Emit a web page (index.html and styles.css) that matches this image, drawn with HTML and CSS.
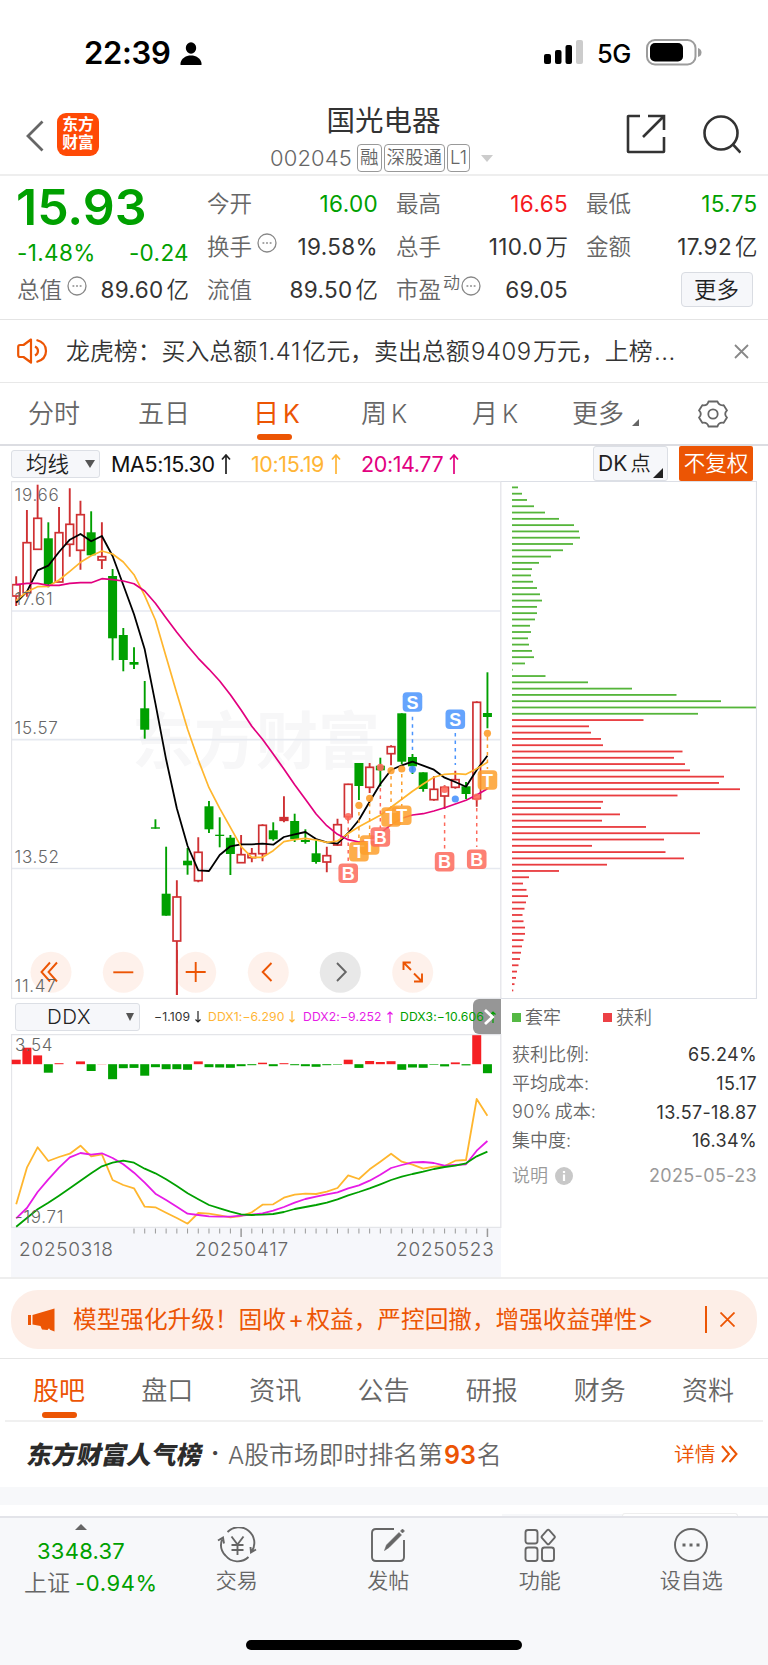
FILE: index.html
```html
<!DOCTYPE html>
<html lang="zh-CN">
<head>
<meta charset="utf-8">
<title>国光电器 002045</title>
<link rel="stylesheet" href="styles.css">
</head>
<body>
<div class="phone">
  <div class="status">
    <span class="time">22:39</span>
    <svg class="person" width="22" height="24" viewBox="0 0 22 24"><ellipse cx="11" cy="6" rx="5.2" ry="5.8"/><path d="M.5 23v-2C1.500 16 6 13.500 11 13.500S20.500 16 21.500 21v2z"/></svg>
    <svg class="signal" width="40" height="26" viewBox="0 0 40 26"><rect x="0" y="15" width="7" height="10" rx="2"/><rect x="11" y="11" width="6.500" height="14" rx="2"/><rect x="21.500" y="6" width="6.500" height="19" rx="2"/><rect class="dim" x="32" y="1" width="7" height="24" rx="2"/></svg>
    <span class="net">5G</span>
    <svg class="battery" width="56" height="27" viewBox="0 0 56 27"><rect x="1" y="1" width="48.500" height="24.500" rx="8" fill="none" stroke="#9c9c9c" stroke-width="2"/><rect x="4" y="4" width="33" height="18.500" rx="5"/><path d="M52 9q3.500 1 3.500 4.500T52 18z" fill="#9c9c9c"/></svg>
  </div>

  <header class="header">
    <svg class="back" width="20" height="32" viewBox="0 0 20 32"><path d="M17.500 1.500 3 16l14.500 14.500"/></svg>
    <div class="logo"><span>东方</span><span>财富</span></div>
    <div class="title">
      <h1>国光电器</h1>
      <div class="sub"><span class="code">002045</span><i class="tag">融</i><i class="tag">深股通</i><i class="tag">L1</i><b class="caret"></b></div>
    </div>
    <svg class="share" width="40" height="40" viewBox="0 0 40 40"><path d="M14 2H2.500Q2 2 2 2.500v35q0 .5.500.5h35q.5 0 .5-.5V23M22 2h16v14M37.500 2.500 17 23"/></svg>
    <svg class="search" width="38" height="40" viewBox="0 0 38 40"><circle cx="18" cy="18" r="16.500"/><path d="m29.500 29 8 8.500"/></svg>
  </header>

  <section class="quote">
    <div class="price">15.93</div>
    <div class="cell"><span>今开</span><b class="g">16.00</b></div>
    <div class="cell"><span>最高</span><b class="r">16.65</b></div>
    <div class="cell"><span>最低</span><b class="g">15.75</b></div>
    <div class="cell change"><b class="g">-1.48%</b><b class="g">-0.24</b></div>
    <div class="cell"><span>换手<svg class="info" width="20" height="20" viewBox="0 0 20 20"><circle cx="10" cy="10" r="9"/><path d="M5.500 10h1.800M9.100 10h1.800M12.700 10h1.800"/></svg></span><b>19.58%</b></div>
    <div class="cell"><span>总手</span><b>110.0<em>万</em></b></div>
    <div class="cell"><span>金额</span><b>17.92<em>亿</em></b></div>
    <div class="cell"><span>总值<svg class="info" width="20" height="20" viewBox="0 0 20 20"><circle cx="10" cy="10" r="9"/><path d="M5.500 10h1.800M9.100 10h1.800M12.700 10h1.800"/></svg></span><b>89.60<em>亿</em></b></div>
    <div class="cell"><span>流值</span><b>89.50<em>亿</em></b></div>
    <div class="cell"><span>市盈<sup>动</sup><svg class="info tight" width="20" height="20" viewBox="0 0 20 20"><circle cx="10" cy="10" r="9"/><path d="M5.500 10h1.800M9.100 10h1.800M12.700 10h1.800"/></svg></span><b>69.05</b></div>
    <div class="cell end"><button class="more">更多</button></div>
  </section>

  <section class="news">
    <svg class="horn" width="31" height="26" viewBox="0 0 31 26"><path d="M14 1.500 6.500 7H3Q1.200 7 1.200 9v8q0 2 1.800 2h3.500l7.500 5.500zM18 8.500q3 1.500 3 4.500t-3 4.500M19.500 2Q29 4.500 29 13t-9.500 11"/></svg>
    <p>龙虎榜：买入总额<i>1.41</i>亿元，卖出总额<i>9409</i>万元，上榜<i>...</i></p>
    <svg class="x" width="15" height="15" viewBox="0 0 15 15"><path d="m1 1 13 13M14 1 1 14"/></svg>
  </section>

  <nav class="periods">
    <span class="p1">分时</span><span class="p2">五日</span><span class="p3 on">日<i>K</i></span><span class="p4">周<i>K</i></span><span class="p5">月<i>K</i></span><span class="p6">更多<b></b></span>
    <svg class="gear" width="30" height="28" viewBox="0 0 30 28"><path d="M10.500 1.500h9q1.200 3.700 5 3.800l1.200-.1 3.300 5.200q-3.600 3.600 0 7.200l-3.300 5.200q-5-.9-6.200 3.700h-9q-1.200-4.600-6.200-3.700L1 17.600q3.600-3.600 0-7.200l3.300-5.200q5 .9 6.200-3.700z" stroke-linejoin="round"/><circle cx="15" cy="14" r="4.700"/></svg>
  </nav>

  <div class="mabar">
    <div class="select"><span>均线</span><b></b></div>
    <span class="ma m5">MA5:15.30</span><svg class="arr k" viewBox="0 0 10 20"><path d="M5 20V1M1 5.500 5 1l4 4.500"/></svg>
    <span class="ma m10">10:15.19</span><svg class="arr o" viewBox="0 0 10 20"><path d="M5 20V1M1 5.500 5 1l4 4.500"/></svg>
    <span class="ma m20">20:14.77</span><svg class="arr p" viewBox="0 0 10 20"><path d="M5 20V1M1 5.500 5 1l4 4.500"/></svg>
    <div class="dk">DK<em>点</em><b></b></div>
    <div class="fq">不复权</div>
  </div>

  <div class="charts">
    <div class="left">
      <svg id="kline" width="491" height="518" viewBox="11 481 491 518"></svg>
      <div class="ddxbar">
        <div class="select"><span>DDX</span><b></b></div>
        <div class="ddxvals"><span class="d0">−1.109</span><svg class="sarr k" viewBox="0 0 6 12"><path d="M3 0v11M.500 8.500 3 11l2.500-2.500"/></svg><span class="d1">DDX1:−6.290</span><svg class="sarr o" viewBox="0 0 6 12"><path d="M3 0v11M.500 8.500 3 11l2.500-2.500"/></svg><span class="d2">DDX2:−9.252</span><svg class="sarr m" viewBox="0 0 6 12"><path d="M3 12V1M.500 3.500 3 1l2.500 2.500"/></svg><span class="d3">DDX3:−10.606</span><svg class="sarr gr" viewBox="0 0 6 12"><path d="M3 12V1M.500 3.500 3 1l2.500 2.500"/></svg></div>
        <div class="next"><svg width="12" height="18" viewBox="0 0 12 18"><path d="m2 2 7.500 7L2 16"/></svg></div>
      </div>
      <svg id="ddx" width="491" height="194" viewBox="11 1034 491 194"></svg>
      <div class="dates"><svg id="ticks" width="491" height="10" viewBox="11 1228 491 10"></svg><div class="daterow"><span>20250318</span><span>20250417</span><span>20250523</span></div></div>
    </div>
    <aside class="right">
      <svg id="profile" width="256" height="518" viewBox="501 481 256 518"></svg>
      <div class="legend"><b class="lg"></b><span>套牢</span><b class="lr"></b><span>获利</span></div>
      <dl>
        <div><dt>获利比例:</dt><dd>65.24%</dd></div>
        <div><dt>平均成本:</dt><dd>15.17</dd></div>
        <div><dt><i>90%</i>成本:</dt><dd>13.57-18.87</dd></div>
        <div><dt>集中度:</dt><dd>16.34%</dd></div>
        <div class="note"><dt>说明<svg width="18" height="18" viewBox="0 0 18 18"><circle cx="9" cy="9" r="9" fill="#c8c8c8"/><path d="M9 4v2M9 7.500V14" stroke="#fff" stroke-width="2.200"/></svg></dt><dd>2025-05-23</dd></div>
      </dl>
    </aside>
  </div>

  <div class="promo">
    <div class="pill">
      <svg class="mega" width="27" height="24" viewBox="0 0 27 24"><path d="M0 7h3v10H0zM4.500 7 26.500.500v23l-4.500-1.800-1-1.500-1.500 1.800-5.500-.5-1.500-3.500-8-1.500z"/></svg>
      <p>模型强化升级！固收<i>+</i>权益，严控回撤，增强收益弹性&gt;</p>
      <span class="bar"></span>
      <svg class="x" width="15" height="15" viewBox="0 0 15 15"><path d="m.5.500 14 14M14.500.500l-14 14"/></svg>
    </div>
  </div>

  <nav class="tabs"><span class="on">股吧</span><span>盘口</span><span>资讯</span><span>公告</span><span>研报</span><span>财务</span><span>资料</span></nav>

  <div class="rank">
    <strong>东方财富人气榜</strong><span class="dot">·</span><span class="rk"><i>A</i>股市场即时排名第<b>93</b>名</span>
    <span class="detail">详情</span><svg class="dbl" width="17" height="18" viewBox="0 0 17 18"><path d="m1 1 7 8-7 8M8.500 1l7 8-7 8"/></svg>
  </div>
  <div class="strip"></div>
  <div class="peek"><i></i><b></b></div>

  <footer class="footer">
    <div class="index"><b class="up"></b><span class="pts">3348.37</span><span class="idx"><em>上证</em>-0.94%</span></div>
    <div class="item"><svg width="40" height="36" viewBox="0 0 40 36"><path d="M8.500 28.500A15.500 15.500 0 0 1 5 12.500M10.500 5A15.600 15.600 0 0 1 34.700 24.500M31.500 30A15.600 15.600 0 0 1 8.500 28.500M1 13.500l5-3 1 6M39 22.500l-5 3-.500-5.500M14.500 9.500l6 8 6-8M20.500 17.500V28M14.500 18h12M14.500 23h12"/></svg><span>交易</span></div>
    <div class="item"><svg width="36" height="36" viewBox="0 0 36 36"><path d="M24 2H6Q2 2 2 6v24q0 4 4 4h24q4 0 4-4V13"/><path d="m14.500 23.500 2-5.500L29 5.500 31.500 8 19 20.500zM30.500 4l2-2 2 2-2 2z" fill="#666" stroke-width=".6"/></svg><span>发帖</span></div>
    <div class="item"><svg width="32" height="36" viewBox="0 0 32 36"><rect x="1.500" y="3" width="12" height="13.500" rx="2.500"/><rect x="1.500" y="20.500" width="12" height="13.500" rx="2.500"/><rect x="18" y="20.500" width="12" height="13.500" rx="2.500"/><path d="M23.200 3.200q1-1 2 0l5.300 6q.7.800 0 1.600l-5.300 6q-1 1-2 0l-5.300-6q-.7-.8 0-1.600z"/></svg><span>功能</span></div>
    <div class="item"><svg width="36" height="36" viewBox="0 0 36 36"><circle cx="18" cy="18" r="16"/><path d="M9.500 18h3M16.500 18h3M23.500 18h3" stroke-width="3"/></svg><span>设自选</span></div>
    <div class="home"></div>
  </footer>
</div>
<script src="charts.js"></script>
</body>
</html>
```
FILE: styles.css
```css
* { box-sizing: border-box; }
body { margin: 0; background: #fff; font-family: Inter, "Noto Sans CJK SC", sans-serif; color: #333; }
i, em { font-style: normal; }
b { font-weight: 400; }
svg { display: block; flex: none; }
.phone { width: 768px; height: 1665px; overflow: hidden; display: flex; flex-direction: column; font-weight: 350; white-space: nowrap; }
.phone > * { flex: none; }

.status { height: 96px; display: flex; align-items: flex-start; padding: 38px 0 0 84px; color: #000; }
.time { font-size: 31px; font-weight: 600; line-height: 30px; width: 96px; letter-spacing: -.3px; }
.person { margin-top: 4px; }
.signal { margin: 1px 0 0 342px; }
.signal .dim { fill: #ccc; }
.net { font-size: 25.500px; font-weight: 450; line-height: 31px; margin-left: 13px; width: 49px; letter-spacing: -.5px; }
.battery { margin-top: 1px; }

.header { height: 80px; display: flex; border-bottom: 2px solid #eee; }
.back { margin: 24px 0 0 25px; fill: none; stroke: #666; stroke-width: 2.800; }
.logo { margin: 17px 0 0 12px; width: 42px; height: 43px; border-radius: 9px; background: #ff4a06; color: #fff; display: flex; flex-direction: column; align-items: center; justify-content: center; font-size: 15.800px; line-height: 18px; font-weight: 600; padding-bottom: 1px; }
.title { flex: none; width: 528px; display: flex; flex-direction: column; align-items: center; }
.title h1 { margin: 9px 0 0 41px; font-size: 28.500px; line-height: 31px; font-weight: 400; }
.sub { display: flex; align-items: center; margin: 8px 0 0 37px; height: 28px; color: #666; }
.code { font-size: 22px; width: 87px; letter-spacing: .1px; }
.tag { height: 28px; border: 1.500px solid #999; border-radius: 4px; font-size: 18.500px; line-height: 25px; padding: 0 2px; margin-right: 2px; }
.caret { border: 6.500px solid transparent; border-top: 7px solid #ccc; border-bottom: 0; margin-left: 9px; }
.share { margin: 18px 0 0 -1px; fill: none; stroke: #333; stroke-width: 2.600; }
.search { margin: 19px 0 0 37px; fill: none; stroke: #333; stroke-width: 2.600; }

.quote { height: 144px; border-bottom: 1px solid #e4e4e4; padding: 7px 0 0 17px; display: grid; grid-template-columns: 172px 171px 172px 171.500px; column-gap: 18px; grid-template-rows: 42.500px 43px 42.500px; align-items: center; }
.price { font-size: 50px; font-weight: 600; color: #00a000; line-height: 49px; margin-top: 6px; margin-left: -1px; }
.cell { display: flex; justify-content: space-between; align-items: center; font-size: 22.500px; line-height: 30px; }
.cell span { display: flex; align-items: center; font-size: 22.500px; color: #666; }
.cell b { display: flex; align-items: center; font-weight: 380; letter-spacing: .35px; }
.cell em { font-size: 22.500px; margin-left: 3px; font-weight: 350; letter-spacing: 0; }
.change { padding-top: 12px; }
.end { justify-content: flex-end; }
.cell .g, .g { color: #00a000; }
.r { color: #f5191f; }
.info { margin: -8px 0 0 5px; fill: none; stroke: #888; stroke-width: 1.300; }
.info.tight { margin-left: 0; }
.cell sup { font-size: 17px; line-height: 17px; margin: -12px 1px 0 2px; }
.more { width: 72px; height: 35px; margin-right: 5px; border: 1px solid #d9dce2; border-radius: 4px; background: #f6f7fa; color: #222; font: 350 22.500px/28px "Noto Sans CJK SC", sans-serif; padding: 0 0 3px; }

.news { height: 63px; display: flex; align-items: center; padding-left: 17px; border-bottom: 1px solid #e8e8e8; }
.horn { fill: none; stroke: #ec5504; stroke-width: 2.200; stroke-linejoin: round; }
.news p { margin: -3px 0 0 18px; width: 668px; font-size: 23.900px; }
.news i { margin: 0 1.500px; letter-spacing: .5px; }
.x { fill: none; stroke: #888; stroke-width: 1.800; }

.periods { height: 63px; display: flex; align-items: center; border-bottom: 2px solid #dcdde2; font-size: 26px; color: #666; padding: 1px 0 0 28px; line-height: 60px; }
.periods span { display: block; position: relative; }
.periods i { margin-left: 4px; font-size: 25px; }
.p1 { width: 110px; } .p2 { width: 115px; } .p3 { width: 108px; } .p4 { width: 111px; } .p5 { width: 100px; } .p6 { width: 126px; }
.on { color: #ec5504; font-weight: 400; }
.p3.on::after { content: ""; position: absolute; left: 4px; top: 50px; width: 35px; height: 6px; border-radius: 3px; background: #ec5504; }
.p6 b { display: inline-block; border-left: 7px solid transparent; border-bottom: 7px solid #666; margin-left: 8px; position: relative; top: 3px; }
.gear { fill: none; stroke: #666; stroke-width: 1.800; }

.mabar { height: 35px; display: flex; align-items: center; padding-left: 11px; }
.select { border: 1px solid #dcdfe5; background: #f6f7fa; border-radius: 3px; display: flex; align-items: center; color: #222; }
.select b, .ddxbar .select b { border: 5px solid transparent; border-top: 8px solid #555; border-bottom: 0; }
.mabar .select { width: 89px; height: 28px; font-size: 21.500px; padding-left: 14px; line-height: 24px; }
.mabar .select b { margin-left: 16px; }
.ma { font-size: 21.500px; font-weight: 380; letter-spacing: -.4px; line-height: 30px; padding-top: 1px; }
.m5 { color: #111; margin-left: 11px; width: 110px; }
.m10 { color: #ffb536; margin-left: 20px; width: 80px; }
.m20 { color: #e2007f; margin-left: 20px; width: 88px; }
.arr { width: 10px; height: 20px; fill: none; stroke-width: 1.700; }
.k { stroke: #222; } .o { stroke: #ffb536; } .p { stroke: #e2007f; } .m { stroke: #e61be6; } .gr { stroke: #00a000; }
.dk { width: 75px; height: 35px; margin-left: 134px; border: 1px solid #dcdfe5; border-radius: 3px; background: #f6f7fa; font-size: 21px; line-height: 34px; padding-left: 4px; position: relative; color: #222; font-weight: 380; }
.dk em { margin-left: 3px; font-weight: 350; font-size: 20.500px; }
.dk b { position: absolute; right: 4px; bottom: 2px; border-left: 10px solid transparent; border-bottom: 10px solid #222; }
.fq { width: 74px; height: 35px; margin-left: 11px; background: #ec5504; border-radius: 2px; color: #fff; font-size: 21.500px; line-height: 34px; text-align: center; }

.charts { display: flex; padding-left: 11px; height: 798px; border-bottom: 2px solid #eee; }
.left { width: 490px; }
.left > svg { margin-right: -1px; }
.ddxbar { height: 35px; display: flex; align-items: center; padding-left: 4px; position: relative; }
.ddxbar .select { width: 125px; height: 28px; font-size: 20.500px; padding-left: 31px; line-height: 26px; }
.ddxbar .select span { width: 79px; letter-spacing: .5px; }
.ddxbar .select b { border-width: 8px 4.500px 0; }
.ddxvals { display: flex; align-items: center; font-size: 12.200px; font-weight: 380; margin-left: 14px; letter-spacing: .1px; position: relative; z-index: 1; }
.sarr { width: 6px; height: 12px; fill: none; stroke-width: 1.200; }
.d0 { width: 41px; } .d1 { color: #ffb536; width: 81px; margin-left: 7px; } .d2 { color: #e61be6; width: 84px; margin-left: 8px; } .d3 { color: #00a000; width: 90px; margin-left: 7px; }
.next { position: absolute; right: 0; top: 0; width: 28px; height: 35px; border-radius: 6px 0 0 6px; background: #969696; display: flex; align-items: center; justify-content: center; padding-left: 3px; }
.next svg { position: relative; z-index: 2; }
.next path { fill: none; stroke: #fff; stroke-width: 2.800; }
.dates { height: 49px; background: #f6f7fb; }
.daterow { display: grid; grid-template-columns: 176px 201px 1fr; padding: 0 0 0 8px; font-size: 19px; line-height: 23px; color: #666; letter-spacing: .75px; }
.right { width: 256px; }
.legend { display: flex; align-items: center; height: 38px; padding-left: 11px; font-size: 18px; line-height: 24px; padding-bottom: 1px; color: #666; }
.legend b { width: 9px; height: 9px; margin-right: 4px; }
.lg { background: #55b944; } .lr { background: #ec4145; }
.legend span { width: 78px; }
dl { margin: 3.500px 0 0; padding-left: 11px; }
dl div { display: flex; justify-content: space-between; align-items: center; height: 28.700px; font-size: 18px; line-height: 28px; }
dt { color: #666; display: flex; align-items: center; font-size: 18px; }
dt i { margin-right: 3px; letter-spacing: .3px; }
dd { margin: 0; font-weight: 380; letter-spacing: .35px; padding-top: 1px; }
dl .note { margin-top: 6px; }
.note dt, .note dd { color: #999; }
.note dt svg { margin-left: 7px; }

.promo { height: 80px; padding: 11px 11px 0; border-bottom: 1px solid #e6e6e6; }
.pill { height: 59px; border-radius: 27px; background: #fdeee7; display: flex; align-items: center; padding-left: 17px; color: #ec5504; }
.mega { fill: #ec5504; }
.pill p { margin: -3px 0 0 18px; width: 632px; font-size: 23.650px; font-weight: 380; }
.pill i { margin: 0 2.500px; }
.bar { width: 1.500px; height: 27px; background: #ec5504; margin-right: 13px; }
.pill .x { stroke: #ec5504; }

.tabs { height: 63px; margin: 0 5px; border-bottom: 2px solid #f0f0f0; display: flex; justify-content: space-between; padding: 0 29px 0 28px; font-size: 26px; line-height: 64px; color: #666; }
.tabs span { position: relative; }
.tabs .on { color: #ec5504; }
.tabs .on::after { content: ""; position: absolute; left: 9px; top: 53px; width: 35px; height: 6px; border-radius: 3px; background: #ec5504; }

.rank { height: 65px; display: flex; align-items: center; padding: 0 0 3px 28px; font-size: 24.850px; color: #666; }
.rank strong { font-weight: 900; color: #2b2b2b; transform: skewX(-11deg); width: 176px; font-size: 25px; }
.dot { width: 24px; padding-left: 7px; color: #444; font-weight: 700; }
.rk { width: 447px; }
.rk b { font-weight: 600; color: #ec5504; margin: 0 1px; font-size: 25px; }
.rk i { font-size: 24px; }
.detail { color: #ec5504; font-size: 20.800px; width: 46px; margin-left: -1px; }
.dbl { fill: none; stroke: #ec5504; stroke-width: 2; margin: 1px 0 0 1px; }
.strip { height: 18px; background: #f7f8fa; }
.peek { height: 11px; display: flex; justify-content: flex-end; align-items: flex-end; padding-right: 30px; }
.peek i { width: 120px; height: 2px; background: #f7f8fa; }
.peek b { width: 116px; height: 3px; border: 1px solid #eee; border-bottom: 0; border-radius: 3px 3px 0 0; }

.footer { height: 149px; background: #f7f8fa; border-top: 2px solid #e3e4e9; display: flex; position: relative; padding-left: 10px; }
.index { width: 151px; display: flex; flex-direction: column; align-items: flex-start; color: #00a000; font-size: 22px; font-weight: 380; }
.up { border: 6px solid transparent; border-bottom: 6px solid #666; border-top: 0; margin: 6px 0 5px 65px; }
.pts { line-height: 32px; margin-left: 27px; letter-spacing: .25px; }
.idx { line-height: 32px; margin-left: 14px; letter-spacing: .6px; }
.idx em { color: #666; font-size: 23px; font-weight: 350; margin-right: 5px; letter-spacing: 0; }
.item { width: 151.500px; display: flex; flex-direction: column; align-items: center; font-size: 21px; line-height: 30px; color: #666; padding-top: 9px; }
.item svg { fill: none; stroke: #666; stroke-width: 1.900; }
.item span { margin-top: 3px; }
.home { position: absolute; left: 246px; top: 122px; width: 276px; height: 10px; border-radius: 5px; background: #000; }

.axis { font-size: 17px; fill: #666; font-family: Inter, sans-serif; letter-spacing: .7px; }
.wm { font: 700 62px "Noto Sans CJK SC", sans-serif; fill: #f7f7f8; }
.badge { font: 700 18px "Liberation Sans", sans-serif; fill: #fff; text-anchor: middle; }
```
FILE: charts.js
```js
const COUNT = 45, X0 = 16.2, STEP = 10.71;
const cx = i => X0 + STEP * i;
const RED = '#cf3133', GREEN = '#00a000';

// colour, high, low, body top, body bottom
const candles = [
  ['r',576.3,606,584.7,596],['r',510,596.7,542.7,592.7],['r',484.7,549.3,518.3,549.3],['g',522.3,587.3,538.3,584.3],
  ['r',507,582,532.7,582],['r',488.3,556.7,524.3,544.3],['r',500.7,569.7,514.7,550.3],['g',511.3,556,532.3,555.3],
  ['r',522.3,569,556.7,560],['g',569,660.3,576,638.3],['g',628,671.3,635,660],['g',647.3,669,662,664.7],
  ['g',681,738.7,708.3,729.7],['g',819.3,828.7,827.3,828.7],['g',846.7,915.7,893.7,915.7],['r',880.3,995,897,941],
  ['g',848,874.7,860.7,865.3],['r',837.3,882.3,852.3,880.7],['g',801,833,806.3,829.3],['g',817.3,847.3,834.7,836],
  ['g',835,875,837.7,854],['r',835,863,854.7,862.7],['r',848,862.3,853.7,857.7],['r',824.3,861.3,825.3,853.7],
  ['g',822.3,840.7,830.3,839.3],['r',796.3,822.3,817.7,820.3],['g',813.7,842,821,839.3],['g',829.3,843.7,840,842],
  ['g',840.7,863.7,853.3,862],['r',846.7,872.3,855.7,862],['r',818.7,846,824.7,845],['r',783.7,821,784.3,816.7],
  ['g',763,800,763,786],['r',763,793,767.3,787.3],['g',757.7,786.3,765.7,770.3],['r',745.3,765.3,746.7,753.7],
  ['g',713.3,764,713.3,761.7],['g',754,774,757,766.3],['g',772.3,791.7,772.3,789],['r',776,800.7,789.3,799.7],
  ['r',785.3,809,787.3,796],['r',770.7,788.7,779.7,787.3],['g',782,799,786.3,794],['r',701.3,806.7,702.3,798.7],
  ['g',672.3,728.3,713,717]
];
const ma5 = [602.7,591.7,570.3,565.7,552,539.7,534,541.3,536,556,585,614.3,649.3,703.3,759.3,808.3,846,870.3,871,855,846.3,844.3,844.3,843.7,844.7,837,834.3,832,839,842.3,843.7,833,820,801.7,784,770,765.3,761.7,765.7,769.7,777.7,782,786.7,770,755.7];
const ma10 = [600.7,591.7,586.7,586.3,580,571.3,562.3,555.7,551,554,562,574.7,595.7,620,656.7,693.3,729.3,760,787.7,808.3,827.3,846.7,857.3,857.3,850.7,841.7,839.7,838.3,840,842.3,841,833.5,826.7,821,815.3,807.3,799.3,791.3,784,777.3,774.3,773.7,774.3,768.7,762.3];
const ma20 = [584.7,583.3,583.3,585.3,585.3,583.3,582.7,582.7,578.7,579.7,581,583.7,591,603.3,618,632.3,645.7,658.3,669.3,681,694.7,710,726.3,739.3,754,769,784.7,799.3,814,825.7,834.3,839.7,842,840,833.3,824.7,818.3,815,813.7,811,807.7,804,800.3,795,788.7];

const path = (ys, color, w) => `<polyline fill="none" stroke="${color}" stroke-width="${w}" stroke-linejoin="round" points="${ys.map((y, i) => cx(i).toFixed(1) + ',' + y.toFixed(1)).join(' ')}"/>`;

let k = '<text class="wm" x="132" y="764">东方财富</text>';
for (const y of [611, 739.7, 868.5]) k += `<path d="M11 ${y}H501" stroke="#e6e9f0" stroke-width="1.700"/>`;
candles.forEach(([c, hi, lo, a, b], i) => {
  const x = cx(i), col = c === 'r' ? RED : GREEN;
  if (c === 'g') {
    k += `<path d="M${x} ${hi}V${lo}" stroke="${col}" stroke-width="1.900"/><rect x="${x - 4.5}" y="${a}" width="9" height="${b - a}" fill="${col}"/>`;
  } else {
    const solid = i === 25 ? col : 'none';
    k += `<path d="M${x} ${hi}V${a}M${x} ${b}V${lo}" stroke="${col}" stroke-width="1.900"/><rect x="${x - 3.8}" y="${a}" width="7.6" height="${b - a}" fill="${solid}" stroke="${col}" stroke-width="1.700"/>`;
  }
});
k += path(ma5, '#000', 1.8) + path(ma10, '#ffb62e', 1.7) + path(ma20, '#e2007f', 1.7);

const tones = { S: '#4a94fd', B: '#fd6a5c', T: '#fd9f2c' };
// letter, candle index, badge centre, dash start, dash end, dot centre
const marks = [
  ['T',32,851.7,812,844,805.3],['T',33,845,803,838,798.3],['T',35,817,776,807,770.7],['T',36,815.3,774,806,769],
  ['B',31,873.3,820,861,816.7],['B',34,837,788,828,767.3],['S',37,702,716.7,750,769.3],['S',41,719.3,733,765,799],
  ['B',40,861.7,815,849,789.5],['B',43,859.3,808,847,797],['T',44,780,737,769,733.3]
];
for (const [t, i, y, d1, d2, dot] of marks) {
  const x = cx(i), c = tones[t];
  k += `<path d="M${x} ${d1}V${d2}" stroke="${c}" stroke-width="1.500" stroke-dasharray="3.500 4"/><circle cx="${x}" cy="${dot}" r="3.600" fill="${c}" opacity=".9"/>` +
    `<rect x="${x - 9.8}" y="${y - 9.8}" width="19.600" height="19.600" rx="4" fill="${c}" opacity=".85"/><text class="badge" x="${x}" y="${y + 6.5}">${t}</text>`;
}
const icons = {
  51: 'M50 962.500 41.500 972 50 981.500M57 962.500 48.500 972 57 981.500', 123.3: 'M113.300 972.300H133.300', 195.7: 'M185.700 972H205.700M195.700 962V982',
  268.3: 'M271.500 963 262.700 972 271.500 981', 340.3: 'M337 963 345.800 972 337 981', 412.7: 'M410.800 962.500H403.500V970M403.500 962.500 411 970M422 973.500V981.500H414M414 973.500 422 981.500'
};
for (const key of Object.keys(icons)) {
  const grey = key === '340.3';
  k += `<circle cx="${key}" cy="972.3" r="20.500" fill="${grey ? '#dcdcdc' : '#fdeae0'}" opacity=".65"/><path d="${icons[key]}" fill="none" stroke="${grey ? '#666' : '#ec5504'}" stroke-width="1.900"/>`;
}
// the long lower wick stays above the zoom buttons
k += '<path d="M176.900 950V995" stroke="#cf3133" stroke-width="1.900"/>';
[['19.66',500.7],['17.61',605],['15.57',734],['13.52',862.8],['11.47',992]].forEach(([t, y]) => { k += `<text class="axis" x="14.500" y="${y}">${t}</text>`; });
k += '<path d="M11.500 999V481.500H501.500M500.800 481V999M11 998.500H502" fill="none" stroke="#e4e5e9" stroke-width="1.300"/>';
document.getElementById('kline').innerHTML = k;

// signed bar heights of the DDX histogram
const bars = [4.5,16.5,8.8,-8.5,1,0,2.8,-6.8,.2,-15,-4,-3.7,-11.5,-3,-5,-5,-5.6,2.8,-3,-3.3,-3.6,-2,-1,1.5,-2,1,-1,-2,-2.6,-1,-.5,4.5,-3.7,3.2,2.2,3,-5.6,-3.3,-3.6,-.6,-2.2,1.8,-1.2,29,-9];
const s = a => a.map(v => 940 + v / 3);
const l1 = s([793,683,622,663,651,641,617,649,643,720,735,745,800,802,818,834,851,819,821,826,832,828,817,794,793,773,764,761,762,755,744,706,717,688,665,641,665,674,686,680,678,662,660,477,527]);
const l2 = s([835,804,756,718,683,652,639,644,640,654,673,698,728,761,780,800,821,825,829,830,830,827,824,820,812,801,788,777,770,763,757,745,736,722,704,684,675,667,666,669,677,675,673,632,603]);
const l3 = s([860,834,808,788,767,745,722,700,679,668,662,668,686,700,718,738,760,778,795,805,815,823,825,824,822,816,807,801,795,788,778,766,756,745,733,720,710,702,695,687,681,677,670,649,635]);
let d = '<path d="M11.500 1228V1034.500H501M500.800 1034V1228M11 1227.500H501" fill="none" stroke="#e4e5e9" stroke-width="1.300"/>';
bars.forEach((v, i) => { d += `<rect x="${cx(i) - 4.5}" y="${v > 0 ? 1064.2 - v : 1064.2}" width="9" height="${Math.abs(v)}" fill="${v > 0 ? '#f51f23' : GREEN}"/>`; });
d += path(l1, '#ffb62e', 1.8) + path(l2, '#e61be6', 1.8) + path(l3, GREEN, 1.8);
d += '<text class="axis" x="15" y="1051">3.54</text><text class="axis" x="15" y="1223">-19.71</text>';
document.getElementById('ddx').innerHTML = d;

let t = '';
for (let i = 11; i < COUNT; i++) t += `<path d="M${cx(i)} 1228.500V${i === 21 || i === 44 ? 1237 : 1233.5}" stroke="#999" stroke-width="${i === 21 || i === 44 ? 1.5 : 1}"/>`;
document.getElementById('ticks').innerHTML = t;

const up = [6,10,15,22,33,47,62,67,68,61,51,39,27,20,19,21,25,28,30,25,25,23,18,19,16,17,20,22,13,.7,33.5,76,120,164.5,209,244.5,186];
const down = [131.5,77,79,89,91,170.5,162,173,178,212,207,228,165.5,91,89,108,90,134,188,152,80,153.5,172,95,47,17,11,14.5,16,14,12.5,10.5,11.5,13,13,11.5,10,9,8,6.5,5,4,2.5,1.3];
let p = '';
up.concat(down).forEach((w, i) => { p += `<rect x="512" y="${(486.5 + i * 6.288).toFixed(2)}" width="${w}" height="1.800" fill="${i < up.length ? '#55b53a' : '#e93c3f'}"/>`; });
p += '<path d="M501 481.500H756.500V998.500H501" fill="none" stroke="#dcdfe6" stroke-width="1.200"/>';
document.getElementById('profile').innerHTML = p;
```
